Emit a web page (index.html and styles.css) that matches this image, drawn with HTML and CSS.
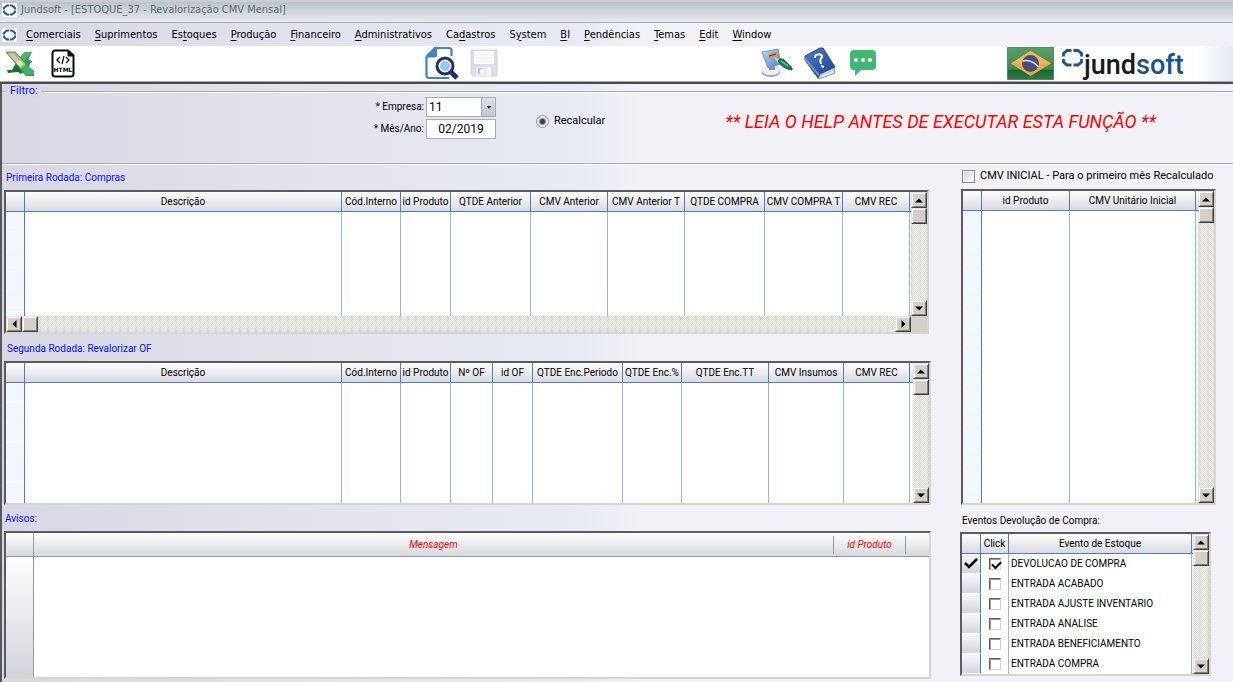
FILE: index.html
```html
<!DOCTYPE html>
<html lang="pt-BR">
<head>
<meta charset="utf-8">
<title>Jundsoft - [ESTOQUE_37 - Revalorização CMV Mensal]</title>
<link rel="stylesheet" href="styles.css">
</head>
<body>
<svg class="defs" width="0" height="0" aria-hidden="true">
  <symbol id="ring" viewBox="0 0 15 14">
    <rect width="15" height="14" fill="#fff"/>
    <path d="M7 2.500H5L2 5v1.500M8 2.500h2L13 5v1.500M2 7.500V9l3 2.500h2M13 7.500V9l-3 2.500H8" fill="none" stroke="#1f5c9c" stroke-width="2.200" stroke-linejoin="round"/>
  </symbol>
  <symbol id="up" viewBox="0 0 8 5"><path d="M0 4.500h8L4 .5z"/></symbol>
  <symbol id="down" viewBox="0 0 8 5"><path d="M0 .5h8L4 4.500z"/></symbol>
  <symbol id="left" viewBox="0 0 5 8"><path d="M4.500 0v8L.5 4z"/></symbol>
  <symbol id="right" viewBox="0 0 5 8"><path d="M.5 0v8L4.500 4z"/></symbol>
</svg>

<header class="titlebar">
  <svg class="ring"><use href="#ring"/></svg>
  <h1>Jundsoft - [ESTOQUE_37 - Revalorização CMV Mensal]</h1>
</header>

<nav class="menubar">
  <svg class="ring"><use href="#ring"/></svg>
  <button><u>C</u>omerciais</button>
  <button><u>S</u>uprimentos</button>
  <button>Es<u>t</u>oques</button>
  <button><u>P</u>rodução</button>
  <button><u>F</u>inanceiro</button>
  <button><u>A</u>dministrativos</button>
  <button>Ca<u>d</u>astros</button>
  <button>S<u>y</u>stem</button>
  <button><u>B</u>I</button>
  <button><u>P</u>endências</button>
  <button><u>T</u>emas</button>
  <button><u>E</u>dit</button>
  <button><u>W</u>indow</button>
</nav>

<div class="toolbar">
  <div class="tools tools-export">
    <button aria-label="Excel">
      <svg width="28" height="25" viewBox="0 0 28 25">
        <path d="M17 9 26 10l-5 7-3-2z" fill="#1e6b35"/>
        <path d="M1 19h5l5-9 8 9-4 4-3-2-10 1z" fill="#1f6e38"/>
        <path d="M26 1h-8l-7 9 5 6 10-6-4-2z" fill="#4eb075"/>
        <path d="M26 1 16 13l5 2 5-5-4-1z" fill="#36995a"/>
        <path d="M0 1h9l19 20v4h-8z" fill="#3cb268"/>
        <path d="M0 1h9l11 12-5 5z" fill="#a3b97f"/>
        <path d="M2 2h5l7 8-3 3z" fill="#cfcb98"/>
        <path d="m10 11 4-2 4 4-4 3z" fill="#e6dfae"/>
        <path d="M0 1h9l19 20v3.500h-8z" fill="none" stroke="#2f8a4d" stroke-width=".8"/>
      </svg>
    </button>
    <button aria-label="HTML">
      <svg width="24" height="29" viewBox="0 0 24 29">
        <path d="M4 1.500h13l5.500 5V25a2.500 2.500 0 0 1-2.500 2.500H4A2.500 2.500 0 0 1 1.500 25V4A2.500 2.500 0 0 1 4 1.500z" fill="#fff" stroke="#0b0b0b" stroke-width="2"/>
        <path d="M17 1.500V7h5.500z" fill="#111" stroke="#111"/>
        <path d="m9 8-3 3 3 3m6-6 3 3-3 3m-2-7-2 8" fill="none" stroke="#111" stroke-width="1.300"/>
        <text x="12" y="23" class="html-mark">HTML</text>
      </svg>
    </button>
  </div>
  <div class="tools tools-file">
    <button aria-label="Visualizar">
      <svg width="34" height="34" viewBox="0 0 34 34">
        <path d="M24 32H4a2.500 2.500 0 0 1-2.500-2.500V11L10 2h14a2.500 2.500 0 0 1 2.500 2.500V10" fill="none" stroke="#3f84c4" stroke-width="2.200"/>
        <path d="M1 11.500V10L9.500 1H12v8a2.500 2.500 0 0 1-2.500 2.500z" fill="#3f84c4"/>
        <path d="m25 25 6 6" stroke="#fff" stroke-width="8"/>
        <path d="m25 25 7 7" stroke="#2b2a77" stroke-width="5"/>
        <circle cx="20" cy="20" r="8" fill="#fff" stroke="#2b2a77" stroke-width="3"/>
        <circle cx="20" cy="20" r="5" fill="#8fcaf2"/>
      </svg>
    </button>
    <button aria-label="Salvar" disabled>
      <svg width="28" height="28" viewBox="0 0 28 28">
        <path d="M1 1h26v26H3l-2-2z" fill="#dcdde9" stroke="#d0d2df"/>
        <path d="M4 2h20v13H4z" fill="#fbfbfe"/>
        <path d="M5 6h18M5 9h18M5 12h18" stroke="#edeef6"/>
        <path d="M6 18h15v9H6z" fill="#e9eaf3"/>
        <path d="M8 19h5v6H8z" fill="#c3c5d6"/><path d="M10 20h3v5h-3zM17 18h4v9h-4z" fill="#f4f4fa"/>
      </svg>
    </button>
  </div>
  <div class="tools tools-help">
    <button aria-label="Temas">
      <svg width="32" height="30" viewBox="0 0 32 30">
        <defs><linearGradient id="scr" x2="1" y2="1"><stop stop-color="#b7defc"/><stop offset="1" stop-color="#3b85df"/></linearGradient></defs>
        <ellipse cx="10" cy="23.500" rx="9.500" ry="5.500" fill="#a3a8b6"/>
        <ellipse cx="10" cy="22.500" rx="9" ry="4.500" fill="#eceef3"/>
        <path d="M8 17h6v5H8z" fill="#8090b4"/>
        <path d="m1 4 16-3 3 15-13 4z" fill="url(#scr)" stroke="#7893b3"/>
        <path d="m8 6 7-2 2 5-6 3-3-2z" fill="#df9145"/><path d="m8 8 7-2" stroke="#523829"/>
        <path d="m13 9 7 3-3 3z" fill="#e7d3a4"/>
        <path d="M17 13q2-4 6-1l8 8v2q-9-1-14-9z" fill="#178347" stroke="#0b633b"/>
        <path d="m20 13 7 5" stroke="#6bd490" stroke-width="1.500"/>
      </svg>
    </button>
    <button aria-label="Ajuda">
      <svg width="32" height="32" viewBox="0 0 32 32">
        <defs><linearGradient id="bk" x2="1" y2="1"><stop stop-color="#5278c8"/><stop offset="1" stop-color="#164694"/></linearGradient></defs>
        <path d="M14 27 30 20l1 6-16 6z" fill="#e8ecf1" stroke="#8290a7"/>
        <path d="M15 29l15-6" stroke="#aeb7c5"/>
        <path d="m1 9 15-8h3l12 19-15 7-2 4L1 13z" fill="url(#bk)" stroke="#284983"/>
        <path d="m1 10 14 17 1 4L1 13z" fill="#7f95c6"/>
        <path d="M11 10c0-3 8-4 7 0-1 2-3 2-1 6m1 3 1 1" fill="none" stroke="#fff" stroke-width="2" stroke-linecap="round"/>
      </svg>
    </button>
    <button aria-label="Mensagens">
      <svg width="26" height="26" viewBox="0 0 26 26">
        <path d="M4 0h18a4 4 0 0 1 4 4v12a4 4 0 0 1-4 4H11l-6 6v-6H4a4 4 0 0 1-4-4V4a4 4 0 0 1 4-4z" fill="#41b871"/>
        <g fill="#fff"><circle cx="6" cy="10" r="2"/><circle cx="13" cy="10" r="2"/><circle cx="20" cy="10" r="2"/></g>
      </svg>
    </button>
  </div>
  <div class="brand">
    <svg width="47" height="33" viewBox="0 0 47 33" role="img" aria-label="Brasil">
      <defs><linearGradient id="flag" x2="0" y2="1"><stop stop-color="#5a9d6c"/><stop offset=".68" stop-color="#3d8b50"/><stop offset=".7" stop-color="#12692d"/><stop offset="1" stop-color="#317d43"/></linearGradient></defs>
      <path d="M.5.5h46v32H.5z" fill="url(#flag)" stroke="#61816b"/>
      <path d="M23.500 4 44 16.500 23.500 29 4 16.500z" fill="#e7a947"/>
      <path d="M23.500 4 44 16.500H4z" fill="#efb657"/>
      <circle cx="23.500" cy="16.500" r="8.500" fill="#46507b"/>
      <path d="M15.500 14q9-2 16 6" fill="none" stroke="#dce1e6" stroke-width="1.500"/>
    </svg>
    <svg class="logo" width="132" height="33" viewBox="0 0 132 33" role="img" aria-label="jundsoft">
      <path d="M9.500 3.500H5L1.500 6.500v3M11.500 3.500H16l3.500 3v3M1.500 12v3L5 18h4.500M19.500 12v3L16 18h-4.500" fill="none" stroke="#195592" stroke-width="2.800"/>
      <text x="22" y="27" class="wordmark"><tspan fill="#16191e">jund</tspan><tspan fill="#19518f">soft</tspan></text>
    </svg>
  </div>
</div>

<main class="form">
  <fieldset class="filter">
    <legend>Filtro:</legend>
    <div class="fields">
      <label for="empresa">* Empresa:</label>
      <div class="combo">
        <select id="empresa"><option>11</option></select>
        <span class="combo-arrow"><svg width="6" height="3" viewBox="0 0 8 5"><use href="#down"/></svg></span>
      </div>
      <label for="mes">* Mês/Ano:</label>
      <input id="mes" type="text" value="02/2019">
    </div>
    <label class="radio"><input type="radio" name="acao" checked>Recalcular</label>
    <p class="warning">** LEIA O HELP ANTES DE EXECUTAR ESTA FUNÇÃO **</p>
  </fieldset>

  <div class="columns">
    <section class="left">
      <h2>Primeira Rodada: Compras</h2>
      <div class="grid grid-first">
        <div class="grid-row">
          <table>
            <colgroup><col class="w19"><col><col class="w59"><col class="w50"><col class="w80"><col class="w77"><col class="w77"><col class="w80"><col class="w78"><col class="w67"><col class="w1"></colgroup>
            <thead><tr><th></th><th>Descrição</th><th>Cód.Interno</th><th>id Produto</th><th>QTDE Anterior</th><th>CMV Anterior</th><th>CMV Anterior T</th><th>QTDE COMPRA</th><th>CMV COMPRA T</th><th>CMV REC</th><th></th></tr></thead>
            <tbody><tr><td class="empty-sel"></td><td></td><td></td><td></td><td></td><td></td><td></td><td></td><td></td><td></td><td></td></tr></tbody>
          </table>
          <div class="vscroll"><button aria-label="Subir"><svg><use href="#up"/></svg></button><span class="thumb"></span><button class="end" aria-label="Descer"><svg><use href="#down"/></svg></button></div>
        </div>
        <div class="hbar">
          <div class="hscroll"><button aria-label="Esquerda"><svg><use href="#left"/></svg></button><span class="thumb"></span><button class="end" aria-label="Direita"><svg><use href="#right"/></svg></button></div>
          <span class="corner"></span>
        </div>
      </div>

      <h2 class="second">Segunda Rodada: Revalorizar OF</h2>
      <div class="grid">
        <div class="grid-row">
          <table>
            <colgroup><col class="w19"><col><col class="w59"><col class="w50"><col class="w42"><col class="w40"><col class="w90"><col class="w59"><col class="w87"><col class="w75"><col class="w66"><col class="w3"></colgroup>
            <thead><tr><th></th><th>Descrição</th><th>Cód.Interno</th><th>id Produto</th><th>Nº OF</th><th>id OF</th><th>QTDE Enc.Periodo</th><th>QTDE Enc.%</th><th>QTDE Enc.TT</th><th>CMV Insumos</th><th>CMV REC</th><th></th></tr></thead>
            <tbody><tr><td class="empty-sel"></td><td></td><td></td><td></td><td></td><td></td><td></td><td></td><td></td><td></td><td></td><td></td></tr></tbody>
          </table>
          <div class="vscroll"><button aria-label="Subir"><svg><use href="#up"/></svg></button><span class="thumb"></span><button class="end" aria-label="Descer"><svg><use href="#down"/></svg></button></div>
        </div>
      </div>

      <h2 class="third">Avisos:</h2>
      <div class="grid notices">
        <div class="grid-row">
          <table>
            <colgroup><col class="w28"><col><col class="w73"><col class="w23"></colgroup>
            <thead><tr><th></th><th>Mensagem</th><th><span class="split">id Produto</span></th><th></th></tr></thead>
            <tbody><tr><td></td><td></td><td></td><td></td></tr></tbody>
          </table>
        </div>
      </div>
    </section>

    <section class="right">
      <label class="initial"><input type="checkbox">CMV INICIAL - Para o primeiro mês Recalculado</label>
      <div class="grid grid-initial">
        <div class="grid-row">
          <table>
            <colgroup><col class="w19"><col class="w88"><col><col class="w2"></colgroup>
            <thead><tr><th></th><th>id Produto</th><th>CMV Unitário Inicial</th><th></th></tr></thead>
            <tbody><tr><td class="empty-sel"></td><td></td><td></td><td></td></tr></tbody>
          </table>
          <div class="vscroll"><button aria-label="Subir"><svg><use href="#up"/></svg></button><span class="thumb"></span><button class="end" aria-label="Descer"><svg><use href="#down"/></svg></button></div>
        </div>
      </div>
      <h2 class="events-title">Eventos Devolução de Compra:</h2>
      <div class="grid events">
        <div class="grid-row">
          <table>
            <colgroup><col class="w19"><col class="w28"><col><col class="w1"></colgroup>
            <thead><tr><th></th><th>Click</th><th>Evento de Estoque</th><th></th></tr></thead>
            <tbody>
              <tr><td class="sel"><svg width="14" height="11" viewBox="0 0 14 11"><path d="m1 5 4 4 8-8" fill="none" stroke="#000" stroke-width="2.500"/></svg></td><td class="pick"><input type="checkbox" id="e1" checked></td><td><label for="e1">DEVOLUCAO DE COMPRA</label></td><td></td></tr>
              <tr><td class="sel"></td><td class="pick"><input type="checkbox" id="e2"></td><td><label for="e2">ENTRADA ACABADO</label></td><td></td></tr>
              <tr><td class="sel"></td><td class="pick"><input type="checkbox" id="e3"></td><td><label for="e3">ENTRADA AJUSTE INVENTARIO</label></td><td></td></tr>
              <tr><td class="sel"></td><td class="pick"><input type="checkbox" id="e4"></td><td><label for="e4">ENTRADA ANALISE</label></td><td></td></tr>
              <tr><td class="sel"></td><td class="pick"><input type="checkbox" id="e5"></td><td><label for="e5">ENTRADA BENEFICIAMENTO</label></td><td></td></tr>
              <tr><td class="sel"></td><td class="pick"><input type="checkbox" id="e6"></td><td><label for="e6">ENTRADA COMPRA</label></td><td></td></tr>
            </tbody>
          </table>
          <div class="vscroll"><button aria-label="Subir"><svg><use href="#up"/></svg></button><span class="thumb"></span><button class="end" aria-label="Descer"><svg><use href="#down"/></svg></button></div>
        </div>
      </div>
    </section>
  </div>
</main>
</body>
</html>
```
FILE: styles.css
```css
* { box-sizing: border-box; }

body {
  margin: 0;
  min-height: 100vh;
  display: flex;
  flex-direction: column;
  font: 10px/16px Roboto, "Liberation Sans", sans-serif;
  color: #000;
  background: #f2f1f7;
}

button {
  margin: 0;
  padding: 0;
  border: 0;
  background: none;
  font: inherit;
  color: inherit;
}

input, select { font: inherit; margin: 0; }
h1, h2, p { margin: 0; font-weight: normal; font-size: inherit; }
.defs { position: absolute; }
.ring { width: 15px; height: 14px; flex: none; }

.titlebar {
  display: flex;
  align-items: center;
  gap: 4px;
  height: 23px;
  padding: 0 2px 2px;
  border-bottom: 1px solid #a3adb8;
  background: linear-gradient(#c9cdd3 0 2px, #b9c3cc 2px, #e7e9ee);
  font: 11px/16px "DejaVu Sans Condensed", sans-serif;
  color: #626a70;
}

.menubar {
  display: flex;
  align-items: center;
  gap: 14px;
  height: 23px;
  padding-left: 2px;
  background: linear-gradient(90deg, #d8d8e5, #e8ebf4 580px, #f2f1f7 640px);
  font: 11px/16px "DejaVu Sans Condensed", sans-serif;
}
.menubar .ring { margin-right: -5px; }
.menubar u { text-underline-offset: 2px; }

.toolbar {
  display: flex;
  height: 38px;
  border-bottom: 2px solid #4a4a4c;
  box-shadow: inset 0 -1px #a9a9a9;
  background: linear-gradient(90deg, #fff 97%, #e3eaf5);
}
.tools { display: flex; align-items: center; height: 34px; }
.tools svg, .brand svg { display: block; flex: none; }
.tools-export { flex: 419 1 0; gap: 17px; padding-left: 6px; }
.tools-file { flex: 336 1 0; gap: 11px; }
.tools-help { flex: 246 1 0; gap: 11px; }
.tools-help button:last-child { margin-left: 3px; }
.brand { flex: 226 1 0; display: flex; align-items: center; gap: 8px; height: 34px; }
.html-mark { font: bold 6px "DejaVu Sans", sans-serif; text-anchor: middle; }
.wordmark { font: 500 27px Roboto, "Liberation Sans", sans-serif; }

.form {
  flex: 1;
  display: flex;
  flex-direction: column;
  border-left: 2px solid #58585c;
  background: linear-gradient(90deg, #d8d8e5, #e3e3ec 320px, #e8ebf4 580px, #f2f1f7 640px);
}

.filter {
  display: flex;
  align-items: flex-start;
  height: 80px;
  min-width: 0;
  margin: 0 0 1px;
  padding: 0 0 0 370px;
  border: 1px solid #a9adb5;
  border-width: 1px 0;
  box-shadow: inset 0 1px #fff, 0 1px #fff;
}
.filter legend {
  margin-left: -365px;
  padding: 0 3px;
  line-height: 14px;
  font-size: 11px;
  color: #0016e0;
  background: #d8d8e5;
}
.fields {
  display: grid;
  grid-template-columns: 52px 70px;
  grid-auto-rows: 20px;
  gap: 2px;
  align-items: center;
  margin-top: -1px;
}
.fields label { text-align: right; white-space: nowrap; }
.fields input, .combo {
  width: 70px;
  height: 20px;
  border: 1px solid #a7abb5;
  background: #fff;
}
.fields input { font-size: 12px; text-align: center; padding: 0; }
.combo { position: relative; }
.combo select {
  appearance: none;
  width: 100%;
  height: 18px;
  padding: 0 2px;
  border: 0;
  background: none;
  font-size: 12px;
}
.combo-arrow {
  position: absolute;
  top: 0;
  right: 0;
  width: 14px;
  height: 18px;
  display: grid;
  place-items: center;
  border-left: 1px solid #a7abb5;
  background: linear-gradient(#dcdfe3, #c2c7ce);
  pointer-events: none;
}
.radio { display: flex; align-items: center; gap: 5px; margin: 15px 0 0 40px; font-size: 11px; }
.radio input {
  appearance: none;
  width: 13px;
  height: 13px;
  border: 1px solid #8e9199;
  border-radius: 50%;
  background: radial-gradient(circle, #3b4450 0 2px, #dfe1e6 4px, #fff 5px);
}
.warning { margin: 12px 0 0 120px; font-size: 18px; line-height: 24px; font-style: italic; color: #f00; white-space: nowrap; }

.columns {
  flex: 1;
  display: grid;
  grid-template-columns: minmax(0, 927fr) minmax(0, 255fr);
  column-gap: 30px;
  padding: 5px 17px 3px 2px;
}
.left, .right { display: flex; flex-direction: column; }
.left h2 { padding-left: 2px; margin-bottom: 4px; color: #0016e0; }
.left .second { margin-top: 7px; padding-left: 3px; }
.left .third { margin-top: 6px; padding-left: 1px; }

.grid {
  flex: 1 1 144px;
  display: flex;
  flex-direction: column;
  border: 2px solid;
  border-color: #5b5b5d #d8d5cd #d8d5cd #5b5b5d;
  background: #fff;
}
.grid-first { margin-right: 2px; }
.grid-row { flex: 1; display: flex; }
table { flex: 1; width: 100%; min-width: 0; border-collapse: separate; border-spacing: 0; table-layout: fixed; }
th {
  height: 20px;
  padding: 0;
  border-right: 1px solid #4a7fc3;
  border-bottom: 1px solid #4a7fc3;
  background: linear-gradient(#fdfdfd, #d8dadf);
  font-weight: normal;
  line-height: 18px;
  white-space: nowrap;
}
td { padding: 0; border-right: 1px solid #9cb5dd; }
td:first-child { border-right-color: #4a7fc3; }
th:last-child, td:last-child { border-right: 0; }
.empty-sel { background: repeating-linear-gradient(#f2f6fd 0 19px, #fff 19px 20px); }

.w1 { width: 1px; } .w2 { width: 2px; } .w3 { width: 3px; }
.w19 { width: 19px; } .w23 { width: 23px; } .w28 { width: 28px; }
.w40 { width: 40px; } .w42 { width: 42px; } .w50 { width: 50px; } .w59 { width: 59px; }
.w66 { width: 66px; } .w67 { width: 67px; } .w73 { width: 73px; } .w75 { width: 75px; }
.w77 { width: 77px; } .w78 { width: 78px; } .w80 { width: 80px; } .w87 { width: 87px; }
.w88 { width: 88px; } .w90 { width: 90px; }

.vscroll, .hscroll {
  display: flex;
  background: repeating-conic-gradient(#d4d0c8 0 25%, #fff 0 50%) 0 0 / 2px 2px;
}
.vscroll { flex-direction: column; width: 16px; }
.hscroll { flex: 1; }
.vscroll button, .hscroll button, .thumb {
  display: grid;
  place-items: center;
  width: 16px;
  height: 16px;
  border: 1px solid;
  border-color: #e6e3dd #404040 #404040 #e6e3dd;
  background: #d4d0c8;
  box-shadow: inset 1px 1px #fff, inset -1px -1px #808080;
}
.vscroll .end { margin-top: auto; }
.hscroll .end { margin-left: auto; }
.vscroll svg { width: 8px; height: 5px; }
.hscroll svg { width: 5px; height: 8px; }
.hbar { display: flex; }
.corner { width: 16px; background: #d4d0c8; }

.notices { flex-basis: 148px; }
.notices th { height: 24px; border-color: #9297a5; color: #f00; font-style: italic; background: linear-gradient(#fdfdfd, #d6d8dd); }
.notices th:nth-child(n+2) { border-right: 0; }
.notices td { border-right: 0; }
.notices td:first-child { border-right: 1px solid #9297a5; background: linear-gradient(#fdfdfd, #e9e9ee 50%, #d0d3d9); }
.split { display: block; border: 1px solid #9297a5; border-width: 0 1px; }

.initial { display: flex; align-items: center; gap: 5px; margin: -2px 0 5px 1px; font-size: 11px; white-space: nowrap; }
.initial input {
  appearance: none;
  flex: none;
  width: 13px;
  height: 13px;
  border: 1px solid #85878d;
  background: linear-gradient(135deg, #ccd0d8, #fff);
  box-shadow: inset 0 0 0 1px #fff;
}
.grid-initial { flex: 1 1 316px; }
.events-title { margin: 8px 0 3px 1px; }
.events { flex: 0 0 144px; margin: 0 5px 3px -1px; }
.events td { height: 20px; }
.events td label { display: block; padding-left: 2px; white-space: nowrap; }
.events .sel { border-bottom: 1px solid #fff; background: linear-gradient(#f7f7f9, #d3d6db); text-align: center; }
.events .sel svg { display: block; margin: 0 auto; }
.pick input {
  appearance: none;
  display: block;
  position: relative;
  width: 12px;
  height: 12px;
  margin: 0 auto;
  border: 1px solid;
  border-color: #606060 #d4d0c8 #d4d0c8 #606060;
  box-shadow: inset 1px 1px #9a9a9a;
}
.pick input:checked::after {
  content: "";
  position: absolute;
  left: 2px;
  top: 2px;
  width: 7px;
  height: 4px;
  border: solid #000;
  border-width: 0 0 2px 2px;
  rotate: -45deg;
}
```
